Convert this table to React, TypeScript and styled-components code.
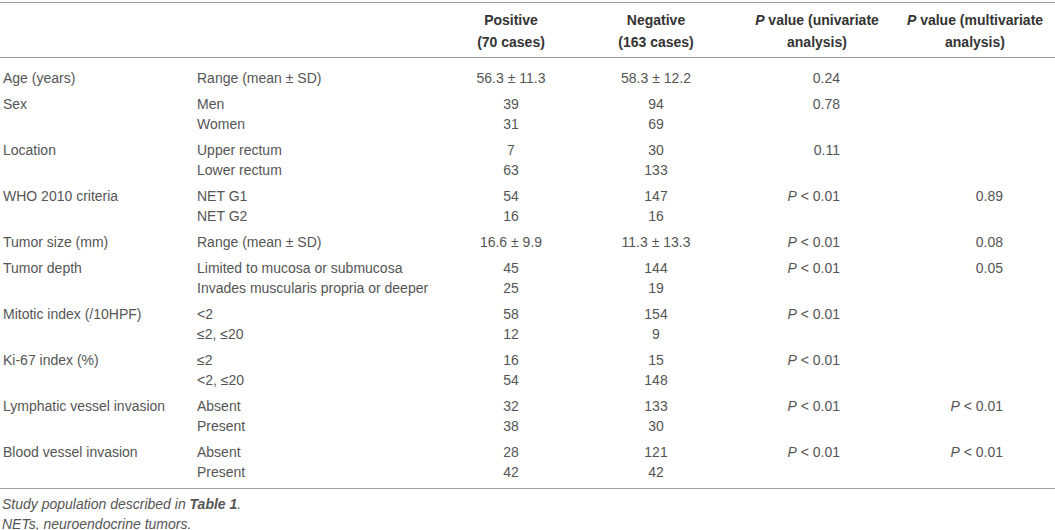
import React from "react";
import styled, { createGlobalStyle } from "styled-components";

const Global = createGlobalStyle`
  html, body { margin: 0; padding: 0; background: #ffffff; }
  body { font-family: "Liberation Sans", Arial, Helvetica, sans-serif; }
`;

const COLS = "194px 246px 142px 148px 174px 142px 9px";

const Table = styled.div`
  margin-top: 2px;
  width: 1055px;
  border-top: 1px solid #a0a0a0;
  font-size: 14px;
  color: #555555;
`;

const HeaderRow = styled.div`
  display: grid;
  grid-template-columns: ${COLS};
  padding: 6px 0 4px;
  border-bottom: 1px solid #a0a0a0;
  font-weight: bold;
  color: #333333;
  line-height: 22px;
`;

const HeadCell = styled.div`
  text-align: center;
  white-space: nowrap;
`;

const Body = styled.div`
  padding: 7px 0 3px;
  border-bottom: 1px solid #a0a0a0;
`;

const Group = styled.div`
  display: grid;
  grid-template-columns: ${COLS};
  padding: 3px 0;
  line-height: 20px;
`;

type Align = "left" | "center" | "right";

const Cell = styled.div<{ $align: Align; $pl?: number; $pr?: number }>`
  text-align: ${(p) => p.$align};
  padding-left: ${(p) => p.$pl ?? 0}px;
  padding-right: ${(p) => p.$pr ?? 0}px;
  white-space: nowrap;
`;

const Line = styled.div`
  height: 20px;
`;

const Em = styled.i`
  font-style: italic;
`;

const Footer = styled.div`
  padding-top: 5px;
  padding-left: 2px;
  line-height: 20px;
  font-size: 14px;
  font-style: italic;
  color: #555555;
`;

type Row = {
  label: string;
  sub: string[];
  pos: string[];
  neg: string[];
  uni?: React.ReactNode;
  multi?: React.ReactNode;
};

const PLess = () => (
  <>
    <Em>P</Em> &lt; 0.01
  </>
);

const rows: Row[] = [
  { label: "Age (years)", sub: ["Range (mean ± SD)"], pos: ["56.3 ± 11.3"], neg: ["58.3 ± 12.2"], uni: "0.24" },
  { label: "Sex", sub: ["Men", "Women"], pos: ["39", "31"], neg: ["94", "69"], uni: "0.78" },
  { label: "Location", sub: ["Upper rectum", "Lower rectum"], pos: ["7", "63"], neg: ["30", "133"], uni: "0.11" },
  { label: "WHO 2010 criteria", sub: ["NET G1", "NET G2"], pos: ["54", "16"], neg: ["147", "16"], uni: <PLess />, multi: "0.89" },
  { label: "Tumor size (mm)", sub: ["Range (mean ± SD)"], pos: ["16.6 ± 9.9"], neg: ["11.3 ± 13.3"], uni: <PLess />, multi: "0.08" },
  {
    label: "Tumor depth",
    sub: ["Limited to mucosa or submucosa", "Invades muscularis propria or deeper"],
    pos: ["45", "25"],
    neg: ["144", "19"],
    uni: <PLess />,
    multi: "0.05",
  },
  { label: "Mitotic index (/10HPF)", sub: ["<2", "≤2, ≤20"], pos: ["58", "12"], neg: ["154", "9"], uni: <PLess /> },
  { label: "Ki-67 index (%)", sub: ["≤2", "<2, ≤20"], pos: ["16", "54"], neg: ["15", "148"], uni: <PLess /> },
  { label: "Lymphatic vessel invasion", sub: ["Absent", "Present"], pos: ["32", "38"], neg: ["133", "30"], uni: <PLess />, multi: <PLess /> },
  { label: "Blood vessel invasion", sub: ["Absent", "Present"], pos: ["28", "42"], neg: ["121", "42"], uni: <PLess />, multi: <PLess /> },
];

export default function App() {
  return (
    <>
      <Global />
      <Table>
        <HeaderRow>
          <HeadCell />
          <HeadCell />
          <HeadCell>
            Positive
            <br />
            (70 cases)
          </HeadCell>
          <HeadCell>
            Negative
            <br />
            (163 cases)
          </HeadCell>
          <HeadCell>
            <Em>P</Em> value (univariate
            <br />
            analysis)
          </HeadCell>
          <HeadCell>
            <Em>P</Em> value (multivariate
            <br />
            analysis)
          </HeadCell>
          <HeadCell />
        </HeaderRow>
        <Body>
          {rows.map((r) => (
            <Group key={r.label}>
              <Cell $align="left" $pl={3}>
                <Line>{r.label}</Line>
              </Cell>
              <Cell $align="left" $pl={3}>
                {r.sub.map((s) => (
                  <Line key={s}>{s}</Line>
                ))}
              </Cell>
              <Cell $align="center">
                {r.pos.map((s, i) => (
                  <Line key={i}>{s}</Line>
                ))}
              </Cell>
              <Cell $align="center">
                {r.neg.map((s, i) => (
                  <Line key={i}>{s}</Line>
                ))}
              </Cell>
              <Cell $align="right" $pr={64}>
                <Line>{r.uni}</Line>
              </Cell>
              <Cell $align="right" $pr={43}>
                <Line>{r.multi}</Line>
              </Cell>
              <Cell $align="left" />
            </Group>
          ))}
        </Body>
        <Footer>
          Study population described in <b>Table 1</b>.
          <br />
          NETs, neuroendocrine tumors.
        </Footer>
      </Table>
    </>
  );
}
